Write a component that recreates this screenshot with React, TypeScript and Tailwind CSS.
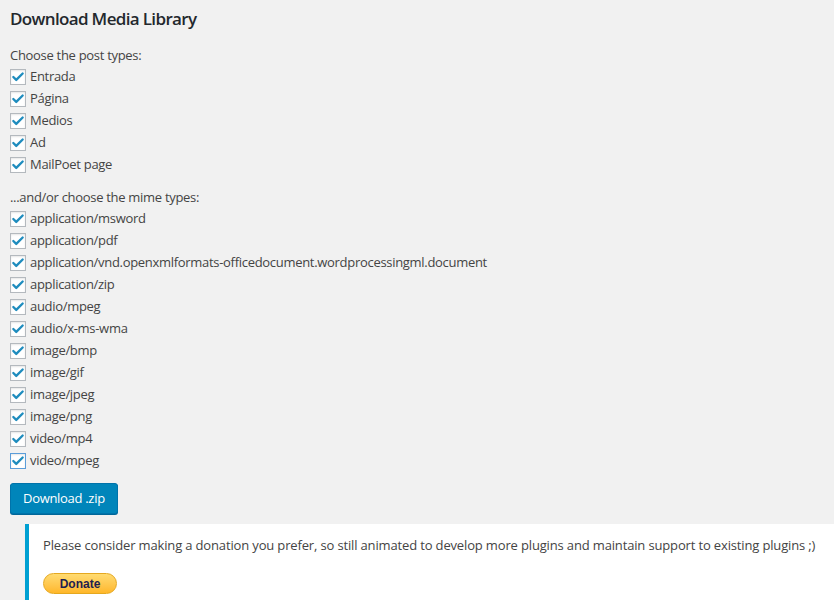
import { Check } from "lucide-react";

const POST_TYPES = ["Entrada", "Página", "Medios", "Ad", "MailPoet page"];

const MIME_TYPES = [
  "application/msword",
  "application/pdf",
  "application/vnd.openxmlformats-officedocument.wordprocessingml.document",
  "application/zip",
  "audio/mpeg",
  "audio/x-ms-wma",
  "image/bmp",
  "image/gif",
  "image/jpeg",
  "image/png",
  "video/mp4",
  "video/mpeg",
];

function CheckRow({ label, focused }: { label: string; focused?: boolean }) {
  return (
    <label className="flex h-[22px] items-center gap-1">
      <span
        className={`flex h-4 w-4 items-center justify-center border bg-white shadow-[inset_0_1px_2px_rgba(0,0,0,0.1)] ${
          focused ? "border-[#5b9dd9]" : "border-[#b4b9be]"
        }`}
      >
        <Check className="h-[14px] w-[14px] text-[#1e8cbe]" strokeWidth={4} />
      </span>
      <span>{label}</span>
    </label>
  );
}

export default function App() {
  return (
    <div className="min-h-[600px] bg-[#f1f1f1] font-['Open_Sans',sans-serif] text-[13px] tracking-[-0.3px] text-[#444]">
      <div className="px-[10px] pt-[7px]">
        <h1 className="text-[17px] font-semibold leading-[24px] tracking-[-0.65px] text-[#23282d]">
          Download Media Library
        </h1>

        <p className="mt-[13px] leading-[22px]">Choose the post types:</p>
        {POST_TYPES.map((t) => (
          <CheckRow key={t} label={t} />
        ))}

        <p className="mt-[10px] leading-[22px]">...and/or choose the mime types:</p>
        {MIME_TYPES.map((t, i) => (
          <CheckRow key={t} label={t} focused={i === MIME_TYPES.length - 1} />
        ))}

        <button className="mt-[11px] h-[31px] rounded-[3px] border border-[#0073aa] bg-[#0085ba] px-[12px] text-[13px] text-white shadow-[0_1px_0_#006799]">
          Download .zip
        </button>
      </div>

      <div className="ml-[25px] mt-[10px] border-l-4 border-[#00a0d2] bg-white px-[14px] pb-[6px] pt-[10px] shadow-[0_1px_1px_rgba(0,0,0,0.04)]">
        <p className="leading-[22px] tracking-[-0.15px]">
          Please consider making a donation you prefer, so still animated to develop more plugins and maintain support to existing plugins ;)
        </p>
        <button className="mt-[17px] flex h-[21px] w-[74px] items-center justify-center rounded-full border border-[#e5a820] bg-gradient-to-b from-[#ffdb70] to-[#ffb727] font-['Liberation_Sans',sans-serif] text-[12px] font-bold tracking-normal text-[#1f1f4f]">
          Donate
        </button>
      </div>
    </div>
  );
}
